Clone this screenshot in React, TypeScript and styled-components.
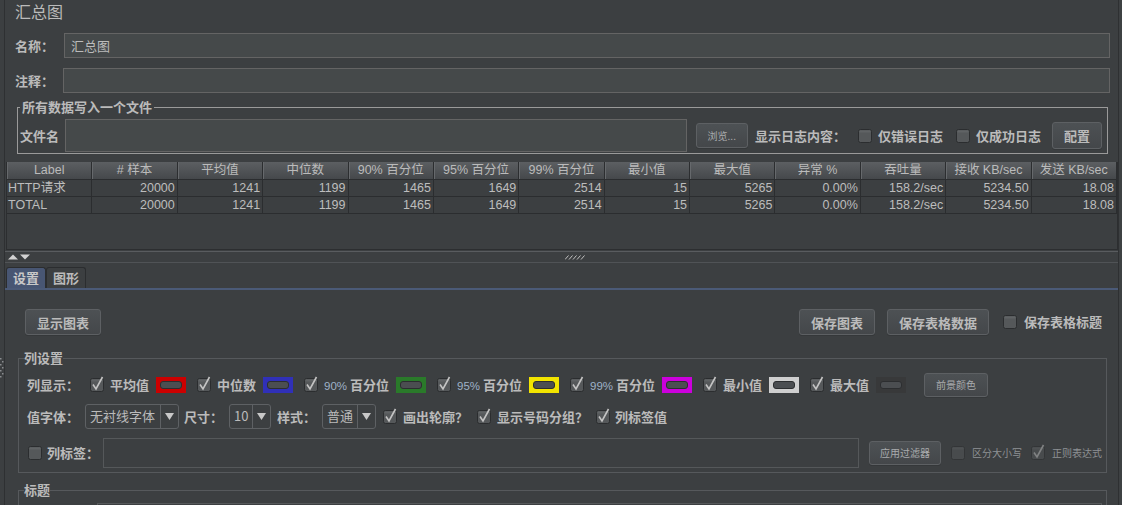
import React from "react";
import styled, { createGlobalStyle } from "styled-components";

const GlobalStyle = createGlobalStyle`
  html, body {
    margin: 0;
    padding: 0;
    background: #3c3f41;
  }
  body {
    font-family: "Noto Sans CJK SC", sans-serif;
    color: #bbbbbb;
  }
`;

const headers = [
  "Label",
  "# 样本",
  "平均值",
  "中位数",
  "90% 百分位",
  "95% 百分位",
  "99% 百分位",
  "最小值",
  "最大值",
  "异常 %",
  "吞吐量",
  "接收 KB/sec",
  "发送 KB/sec",
];

const values = ["20000", "1241", "1199", "1465", "1649", "2514", "15", "5265", "0.00%", "158.2/sec", "5234.50", "18.08"];
const rows = [
  ["HTTP请求", ...values],
  ["TOTAL", ...values],
];

const columns = [
  { label: "平均值", color: "#cc0000" },
  { label: "中位数", color: "#3030b8" },
  { label: "90% 百分位", color: "#2a7a2a" },
  { label: "95% 百分位", color: "#f2e400" },
  { label: "99% 百分位", color: "#cc00dd" },
  { label: "最小值", color: "#cfcfcf" },
  { label: "最大值", color: "#38393a" },
];

const App = () => {
  return (
    <>
      <GlobalStyle />
      <Frame>
        <LeftStrip>
          <GripDots />
        </LeftStrip>
        <Main>
          <Title>汇总图</Title>
          <FieldRow $top={7}>
            <FieldLabel $w={49}>名称：</FieldLabel>
            <TextInput $h={25} defaultValue="汇总图" />
          </FieldRow>
          <FieldRow $top={10}>
            <FieldLabel $w={48}>注释：</FieldLabel>
            <TextInput $h={25} />
          </FieldRow>

          <GroupBox $line="#9a9a9a" $m="7px 10px 0 12px" $p="5px 5px 1px 2px">
            <GroupLegend>所有数据写入一个文件</GroupLegend>
            <FileRow>
              <FieldLabel $w={45}>文件名</FieldLabel>
              <TextInput $h={33} />
              <Button $small $h={25} $ml={9} $px={11}>
                浏览...
              </Button>
              <PlainLabel $ml={7}>显示日志内容：</PlainLabel>
              <CheckBox $ml={12} />
              <PlainLabel $ml={6}>仅错误日志</PlainLabel>
              <CheckBox $ml={13} />
              <PlainLabel $ml={6}>仅成功日志</PlainLabel>
              <Button $h={27} $ml={11} $px={11}>
                配置
              </Button>
            </FileRow>
          </GroupBox>

          <Table>
            <HeadRow>
              {headers.map((h) => (
                <HeadCell key={h}>{h}</HeadCell>
              ))}
            </HeadRow>
            {rows.map((r) => (
              <DataRow key={r[0]}>
                {r.map((v, i) => (
                  <DataCell key={i} $left={i === 0}>
                    {v}
                  </DataCell>
                ))}
              </DataRow>
            ))}
          </Table>

          <SplitBar>
            <SplitArrows />
            <SplitGrip />
          </SplitBar>

          <TabStrip>
            <Tab $active>设置</Tab>
            <Tab>图形</Tab>
          </TabStrip>

          <TabBody>
            <ButtonBar>
              <Button $h={26} $px={11}>
                显示图表
              </Button>
              <Spacer />
              <Button $h={26} $px={11}>
                保存图表
              </Button>
              <Button $h={26} $px={11} $ml={12}>
                保存表格数据
              </Button>
              <CheckBox $ml={14} />
              <PlainLabel $ml={7}>保存表格标题</PlainLabel>
            </ButtonBar>

            <GroupBox $line="#56595c" $m="16px 0 0 0" $p="8px 4px 4px 5px">
              <GroupLegend $pad={0}>列设置</GroupLegend>
              <SettingsRow $h={24}>
                <FieldLabel $w={63}>列显示：</FieldLabel>
                {columns.map((c, i) => (
                  <ColumnItem key={c.label} $ml={i === 0 ? 0 : 11}>
                    <CheckBox on />
                    <PlainLabel $ml={6}>
                      {c.label.includes("%") ? (
                        <>
                          <Pct>{c.label.split(" ")[0]}</Pct> {c.label.split(" ")[1]}
                        </>
                      ) : (
                        c.label
                      )}
                    </PlainLabel>
                    <Swatch $color={c.color} $ml={7}>
                      <SwatchPill />
                    </Swatch>
                  </ColumnItem>
                ))}
                <Button $small $h={24} $ml={18} $px={11}>
                  前景颜色
                </Button>
              </SettingsRow>

              <SettingsRow $h={25} $top={7}>
                <FieldLabel $w={58}>值字体：</FieldLabel>
                <Combo $w={94}>
                  <ComboText>无衬线字体</ComboText>
                  <ComboArrow>
                    <DownArrow />
                  </ComboArrow>
                </Combo>
                <FieldLabel $w={45} $ml={5}>
                  尺寸：
                </FieldLabel>
                <Combo $w={42}>
                  <ComboText>10</ComboText>
                  <ComboArrow>
                    <DownArrow />
                  </ComboArrow>
                </Combo>
                <FieldLabel $w={45} $ml={6}>
                  样式：
                </FieldLabel>
                <Combo $w={54}>
                  <ComboText>普通</ComboText>
                  <ComboArrow>
                    <DownArrow />
                  </ComboArrow>
                </Combo>
                <CheckBox on $ml={7} />
                <PlainLabel $ml={6}>画出轮廓？</PlainLabel>
                <CheckBox on $ml={9} />
                <PlainLabel $ml={6}>显示号码分组？</PlainLabel>
                <CheckBox on $ml={8} />
                <PlainLabel $ml={5}>列标签值</PlainLabel>
              </SettingsRow>

              <SettingsRow $h={30} $top={9}>
                <CheckBox $ml={1} />
                <PlainLabel $ml={5}>列标签：</PlainLabel>
                <TextInput $h={30} $ml={4} $flat />
                <Button $small $h={24} $ml={10} $px={10}>
                  应用过滤器
                </Button>
                <CheckBox $ml={10} $dim />
                <SmallLabel $ml={7}>区分大小写</SmallLabel>
                <CheckBox $ml={9} $dim on />
                <SmallLabel $ml={7}>正则表达式</SmallLabel>
              </SettingsRow>
            </GroupBox>

            <GroupBox $line="#56595c" $m="10px 0 0 0" $p="6px 4px 4px 5px">
              <GroupLegend $pad={0}>标题</GroupLegend>
              <SettingsRow $h={30}>
                <TextInput $h={30} $ml={70} $flat />
              </SettingsRow>
            </GroupBox>
          </TabBody>
        </Main>
        <RightStrip />
      </Frame>
    </>
  );
};
export default App;

const CheckSvg = styled.svg<{ $ml?: number; $dim?: boolean }>`
  flex: none;
  margin-left: ${(p) => p.$ml ?? 0}px;
  overflow: visible;
  opacity: ${(p) => (p.$dim ? 0.5 : 1)};
`;

function CheckBox({ on, $dim, $ml }: { on?: boolean; $dim?: boolean; $ml?: number }) {
  return (
    <CheckSvg width="14" height="14" viewBox="0 0 14 14" $ml={$ml} $dim={$dim}>
      <rect x="0.5" y="0.5" width="13" height="13" rx="2" fill="#55585a" stroke="#2b2d2f" />
      <rect x="1.5" y="1.5" width="11" height="2" fill="#606365" />
      {on && <path d="M3 6.5 L6 11 L12.5 -1" fill="none" stroke="#c4c4c4" strokeWidth="1.6" />}
    </CheckSvg>
  );
}

function GripDots() {
  return (
    <svg width="4" height="20" viewBox="0 0 4 20">
      {[0, 1, 2, 3, 4, 5, 6].map((i) => (
        <rect key={i} x={i % 2 ? 2 : 0} y={i * 3} width="1.5" height="1.5" fill="#8a8d90" />
      ))}
    </svg>
  );
}

function SplitArrows() {
  return (
    <ArrowSvg width="24" height="6" viewBox="0 0 24 6">
      <path d="M1 5.5 L6 0.5 L11 5.5 Z" fill="#d2d2d2" />
      <path d="M13 0.5 L23 0.5 L18 5.5 Z" fill="#d2d2d2" />
    </ArrowSvg>
  );
}

function SplitGrip() {
  return (
    <GripSvg width="20" height="5" viewBox="0 0 20 5">
      {[0, 1, 2, 3, 4].map((i) => (
        <path key={i} d={`M${i * 4} 4.5 L${i * 4 + 3.5} 0.5`} stroke="#c0c0c0" strokeWidth="1" />
      ))}
    </GripSvg>
  );
}

function DownArrow() {
  return (
    <svg width="9" height="7" viewBox="0 0 9 7">
      <path d="M0 0 L9 0 L4.5 7 Z" fill="#c8c8c8" />
    </svg>
  );
}

const Frame = styled.div`
  display: flex;
  width: 1122px;
  height: 505px;
  overflow: hidden;
  background: #3c3f41;
`;

const LeftStrip = styled.div`
  flex: none;
  width: 4px;
  border-right: 1px solid #2e3032;
  padding-top: 358px;
  box-sizing: content-box;
`;

const RightStrip = styled.div`
  flex: none;
  width: 3px;
  border-left: 1px solid #2e3032;
  background: #3e4143;
`;

const Main = styled.div`
  flex: 1;
  min-width: 0;
  display: flex;
  flex-direction: column;
  overflow: hidden;

  & > * {
    flex-shrink: 0;
  }
`;

const Title = styled.div`
  height: 26px;
  box-sizing: border-box;
  padding: 1px 0 0 10px;
  font-size: 16px;
  line-height: 20px;
`;

const FieldRow = styled.div<{ $top: number }>`
  display: flex;
  align-items: center;
  margin-top: ${(p) => p.$top}px;
  padding: 0 8px 0 10px;
`;

const FieldLabel = styled.span<{ $w: number; $ml?: number }>`
  flex: none;
  width: ${(p) => p.$w}px;
  margin-left: ${(p) => p.$ml ?? 0}px;
  font-size: 13px;
  font-weight: 700;
  line-height: 16px;
  white-space: nowrap;
`;

const PlainLabel = styled.span<{ $ml?: number }>`
  flex: none;
  margin-left: ${(p) => p.$ml ?? 0}px;
  font-size: 13px;
  font-weight: 700;
  line-height: 16px;
  white-space: nowrap;
`;

const SmallLabel = styled.span<{ $ml?: number }>`
  flex: none;
  margin-left: ${(p) => p.$ml ?? 0}px;
  font-size: 10px;
  line-height: 14px;
  color: #8e9194;
  white-space: nowrap;
`;

const Pct = styled.span`
  font-family: "Liberation Sans", sans-serif;
  font-weight: 400;
  font-size: 11.5px;
  color: #9fb2c8;
`;

const TextInput = styled.input<{ $h: number; $ml?: number; $flat?: boolean }>`
  flex: 1;
  min-width: 0;
  height: ${(p) => p.$h}px;
  margin: 0 0 0 ${(p) => p.$ml ?? 0}px;
  box-sizing: border-box;
  padding: 0 6px;
  background: ${(p) => (p.$flat ? "#3c3f41" : "#45494a")};
  border: 1px solid ${(p) => (p.$flat ? "#55585a" : "#646464")};
  color: #bbbbbb;
  font-family: "Noto Sans CJK SC", sans-serif;
  font-size: 13px;
  outline: none;
`;

const GroupBox = styled.fieldset<{ $line: string; $m: string; $p: string }>`
  margin: ${(p) => p.$m};
  padding: ${(p) => p.$p};
  border: 1px solid ${(p) => p.$line};
  min-width: 0;
`;

const GroupLegend = styled.legend<{ $pad?: number }>`
  padding: 0 ${(p) => p.$pad ?? 2}px;
  margin: 0;
  font-size: 13px;
  font-weight: 700;
  line-height: 14px;
  color: #bbbbbb;
`;

const FileRow = styled.div`
  display: flex;
  align-items: center;
  height: 33px;
`;

const Button = styled.button<{ $small?: boolean; $h: number; $ml?: number; $px: number }>`
  flex: none;
  height: ${(p) => p.$h}px;
  margin-left: ${(p) => p.$ml ?? 0}px;
  padding: 0 ${(p) => p.$px}px;
  box-sizing: border-box;
  background: linear-gradient(#4d5154, #44474a);
  border: 1px solid #5d6063;
  border-radius: 3px;
  box-shadow: 0 1px 0 #35383a;
  color: ${(p) => (p.$small ? "#a9abad" : "#bbbbbb")};
  font-family: "Noto Sans CJK SC", sans-serif;
  font-size: ${(p) => (p.$small ? 10 : 13)}px;
  font-weight: ${(p) => (p.$small ? 400 : 700)};
  line-height: 1;
  white-space: nowrap;
`;

const Table = styled.div`
  margin: 8px 0 0 1px;
  height: 88px;
  box-sizing: border-box;
  border: 1px solid #2c2e30;
  border-top: none;
  background: #3c3f41;
  font-family: "Liberation Sans", "Noto Sans CJK SC", sans-serif;
  font-size: 12.5px;
`;

const HeadRow = styled.div`
  display: grid;
  grid-template-columns: repeat(13, 1fr);
  height: 17px;
  border-bottom: 1px solid #2b2d2f;
`;

const HeadCell = styled.div`
  background: linear-gradient(#5c5f62, #45484b);
  border-right: 1px solid #2c2e30;
  box-shadow: inset 1px 0 0 #66696c;
  text-align: center;
  line-height: 17px;
  white-space: nowrap;
  overflow: hidden;
`;

const DataRow = styled.div`
  display: grid;
  grid-template-columns: repeat(13, 1fr);
  height: 16px;
  border-bottom: 1px solid #2b2d2f;
`;

const DataCell = styled.div<{ $left?: boolean }>`
  border-right: 1px solid #2b2d2f;
  padding: 0 2px 0 1px;
  text-align: ${(p) => (p.$left ? "left" : "right")};
  line-height: 16px;
  white-space: nowrap;
  overflow: hidden;
  color: #bdbdbd;
`;

const SplitBar = styled.div`
  display: flex;
  align-items: center;
  height: 10px;
  margin-top: 1px;
  border-top: 1px solid #595c5f;
  border-bottom: 1px solid #505356;
`;

const ArrowSvg = styled.svg`
  margin-left: 2px;
`;

const GripSvg = styled.svg`
  margin-left: 534px;
`;

const TabStrip = styled.div`
  display: flex;
  align-items: flex-end;
  height: 22px;
  margin-top: 3px;
  padding-left: 1px;
  border-bottom: 2px solid #4b5a77;
`;

const Tab = styled.div<{ $active?: boolean }>`
  height: 21px;
  box-sizing: border-box;
  padding: 0 6px;
  border: 1px solid #2b2d2f;
  border-bottom: none;
  border-radius: 3px 3px 0 0;
  background: ${(p) => (p.$active ? "#485673" : "#3c3f41")};
  font-size: 13px;
  font-weight: 700;
  line-height: 20px;
  color: ${(p) => (p.$active ? "#c8c8c8" : "#bbbbbb")};
`;

const TabBody = styled.div`
  padding: 19px 11px 0 13px;
`;

const ButtonBar = styled.div`
  display: flex;
  align-items: center;
  height: 26px;
  padding: 0 5px 0 7px;
`;

const Spacer = styled.div`
  flex: 1;
`;

const SettingsRow = styled.div<{ $h: number; $top?: number }>`
  display: flex;
  align-items: center;
  height: ${(p) => p.$h}px;
  margin-top: ${(p) => p.$top ?? 0}px;
  padding-left: 3px;
`;

const ColumnItem = styled.div<{ $ml: number }>`
  display: flex;
  align-items: center;
  flex: none;
  margin-left: ${(p) => p.$ml}px;
`;

const Swatch = styled.span<{ $color: string; $ml: number }>`
  flex: none;
  display: flex;
  width: 30px;
  height: 16px;
  box-sizing: border-box;
  margin-left: ${(p) => p.$ml}px;
  padding: 4px 4px;
  background: ${(p) => p.$color};
`;

const SwatchPill = styled.span`
  flex: 1;
  border-radius: 3px;
  background: #4b4e51;
  border: 1px solid #2c2e30;
`;

const Combo = styled.div<{ $w: number }>`
  flex: none;
  display: flex;
  width: ${(p) => p.$w}px;
  height: 25px;
  box-sizing: border-box;
  border: 1px solid #5e6164;
  border-radius: 3px;
`;

const ComboText = styled.span`
  flex: 1;
  padding-left: 4px;
  border-right: 1px solid #5e6164;
  font-size: 13px;
  line-height: 22px;
  white-space: nowrap;
  overflow: hidden;
`;

const ComboArrow = styled.span`
  flex: none;
  width: 17px;
  display: flex;
  align-items: center;
  justify-content: center;
`;
